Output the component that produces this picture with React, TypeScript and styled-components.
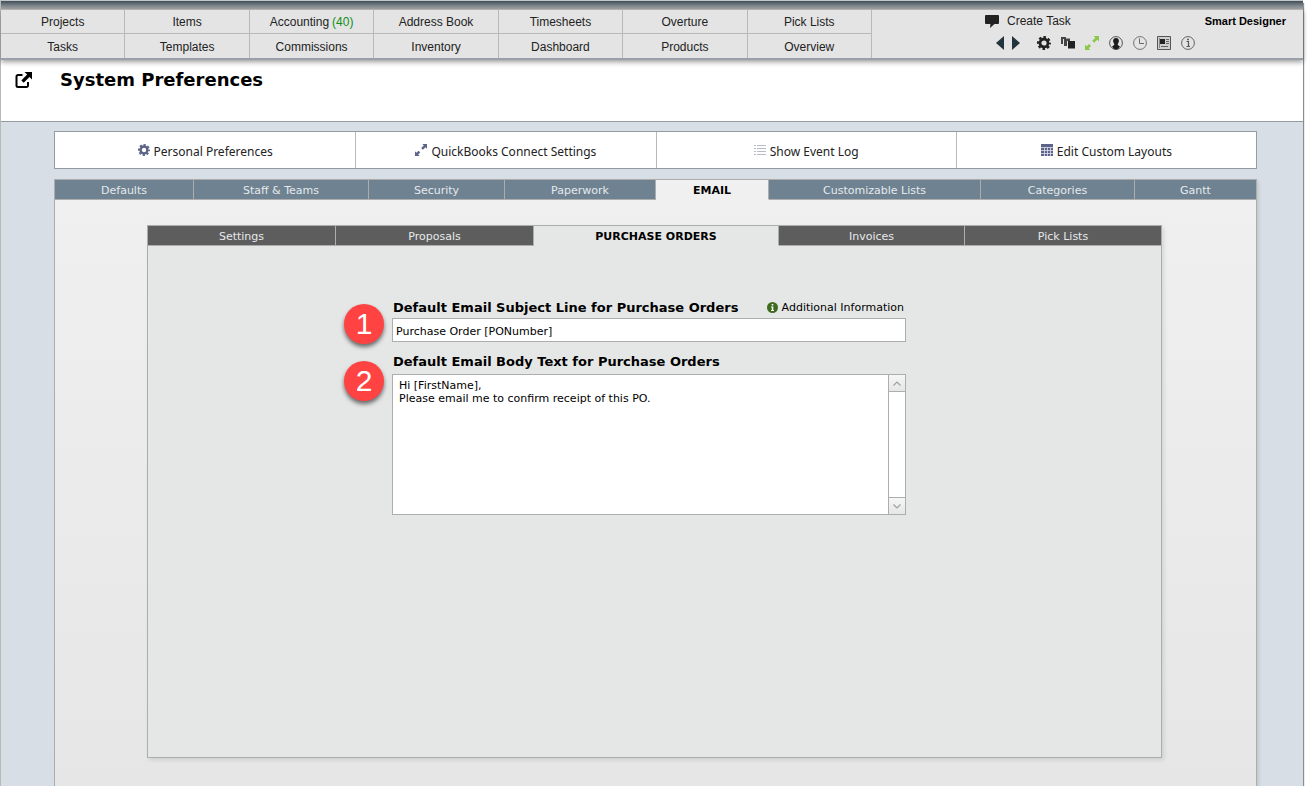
import React from "react";
import styled, { createGlobalStyle } from "styled-components";

const verdana = '"DejaVu Sans", Verdana, sans-serif';
const arial = '"Liberation Sans", Arial, sans-serif';
const humanist = '"Noto Sans", "Open Sans", sans-serif';

const GlobalStyle = createGlobalStyle`
  *, *::before, *::after { box-sizing: border-box; }
  body { margin: 0; background: #fff; color: #000; font-family: ${verdana}; font-size: 11px; }
  button { margin: 0; padding: 0; border: 0; background: none; color: inherit; font: inherit; cursor: pointer; }
  svg { display: block; flex: none; }
`;

const Page = styled.div`
  display: flex;
  flex-direction: column;
  min-height: 100vh;
  margin-right: 4px;
  background: #d7dee5;
  border-top: 1px solid #c4c8c8;
  border-left: 1px solid #b9b9b9;
  box-shadow: 1px 3px 1px #8c8c8c;
`;

const TopStrip = styled.div`
  height: 8px;
  background: linear-gradient(#3f4e59, #a9acae);
`;

const Header = styled.header`
  position: relative;
  display: grid;
  grid-template-columns: 871fr 431fr;
  background: #e4e4e4;
  border-top: 1px solid #b0b0b0;
  border-bottom: 2px solid #9aa0a7;
  box-shadow: 0 2px 5px rgba(0, 0, 0, 0.4);
  font-family: ${arial};
  font-size: 12px;
  color: #222;
`;

const MainNav = styled.nav`
  display: grid;
  grid-template-columns: repeat(7, 1fr);
  grid-template-rows: 24px 24px;
`;

const NavLink = styled.a`
  display: flex;
  align-items: center;
  justify-content: center;
  gap: 3px;
  padding-top: 1px;
  border-right: 1px solid #b9b9b9;
  color: inherit;
  text-decoration: none;
  white-space: nowrap;
  &:nth-child(-n + 7) { border-bottom: 1px solid #b9b9b9; }
`;

const Count = styled.span`
  color: #0f8f1c;
`;

const HeaderTools = styled.div`
  display: flex;
  flex-direction: column;
  gap: 4px;
  padding: 2px 17px 0 113px;
`;

const ToolLine = styled.div`
  display: flex;
  align-items: center;
  justify-content: space-between;
  height: 18px;
`;

const CreateTask = styled.button`
  display: flex;
  align-items: center;
  gap: 8px;
`;

const UserName = styled.strong`
  font-size: 11px;
  color: #000;
`;

const IconLine = styled.div`
  display: flex;
  align-items: center;
  gap: 10px;
  height: 18px;
  padding-left: 11px;
`;

const Arrows = styled.div`
  display: flex;
  gap: 8px;
  margin-right: 7px;
`;

const IconButton = styled.button`
  display: flex;
`;

const TitleBar = styled.div`
  display: flex;
  align-items: flex-start;
  gap: 28px;
  height: 62px;
  padding: 11px 13px;
  background: #fff;
  border-bottom: 1px solid #939ca1;
`;

const Title = styled.h1`
  margin: 0;
  font-size: 18px;
  line-height: 18px;
`;

const Content = styled.main`
  flex: 1;
  display: flex;
  flex-direction: column;
  gap: 10px;
  padding: 9px 46px 0 53px;
`;

const Toolbar = styled.div`
  display: grid;
  grid-template-columns: repeat(4, 1fr);
  height: 38px;
  background: #fff;
  border: 1px solid #939ca1;
`;

const ToolbarButton = styled.button`
  display: flex;
  align-items: center;
  justify-content: center;
  gap: 4px;
  border-left: 1px solid #b9b9b9;
  font-family: ${humanist};
  font-size: 12px;
  color: #222;
  white-space: nowrap;
  &:first-child { border-left: 0; }
`;

const ToolbarLabel = styled.span`
  padding-top: 3px;
`;

const Panel = styled.section`
  flex: 1;
  display: flex;
  flex-direction: column;
  border: 1px solid #adadad;
  border-bottom: 0;
  background: linear-gradient(#f0f0f0, #e6e6e6);
  box-shadow: 2px 2px 3px rgba(0, 0, 0, 0.1);
`;

const Tabs = styled.div<{ $columns: string }>`
  display: grid;
  grid-template-columns: ${(p) => p.$columns};
  height: 20px;
`;

const Tab = styled.button<{ $fill: string }>`
  padding-top: 2px;
  border-right: 1px solid #adadad;
  border-bottom: 1px solid #adadad;
  background: ${(p) => p.$fill};
  color: #e6e9eb;
  white-space: nowrap;
  &:last-child { border-right: 0; }
  &[aria-selected="true"] {
    background: none;
    border-bottom-color: transparent;
    color: #000;
    font-weight: bold;
  }
`;

const InnerPanel = styled.section`
  flex: 1;
  display: flex;
  flex-direction: column;
  margin: 25px 94px 28px 92px;
  border: 1px solid #adadad;
  background: #e5e7e6;
  box-shadow: 2px 2px 4px rgba(0, 0, 0, 0.1);
`;

const Form = styled.form`
  display: flex;
  flex-direction: column;
  gap: 10px;
  padding: 52px 0 60px;
`;

const FieldRow = styled.div`
  display: grid;
  grid-template-columns: 244fr 514fr 255fr;
  align-items: start;
`;

const Step = styled.span<{ $top: number }>`
  justify-self: end;
  width: 40px;
  height: 40px;
  margin: ${(p) => p.$top}px 8px -8px 0;
  border-radius: 50%;
  background: #ff4343;
  box-shadow: 0 3px 4px rgba(0, 0, 0, 0.55);
  color: #fff;
  font: 30px/40px ${arial};
  text-align: center;
`;

const Field = styled.div`
  display: flex;
  flex-direction: column;
  gap: 2px;
`;

const LabelLine = styled.div`
  display: flex;
  align-items: center;
  justify-content: space-between;
  height: 18px;
  padding: 0 2px 0 1px;
`;

const Label = styled.label`
  font-size: 13px;
  font-weight: bold;
  white-space: nowrap;
`;

const InfoLink = styled.a`
  display: flex;
  align-items: center;
  gap: 4px;
  color: #000;
  text-decoration: none;
  white-space: nowrap;
`;

const TextInput = styled.input`
  width: 100%;
  height: 24px;
  padding: 2px 3px 0;
  border: 1px solid #adadad;
  border-radius: 0;
  background: #fff;
  font: 11px/13px ${verdana};
  outline: 0;
`;

const TextBox = styled.div`
  display: flex;
  height: 141px;
  margin-top: 2px;
  border: 1px solid #adadad;
  background: #fff;
`;

const TextArea = styled.textarea`
  flex: 1;
  min-width: 0;
  padding: 4px 6px;
  border: 0;
  background: none;
  font: 11px/13px ${verdana};
  resize: none;
  outline: 0;
  overflow: hidden;
`;

const ScrollBar = styled.div`
  display: flex;
  flex-direction: column;
  justify-content: space-between;
  width: 17px;
  border-left: 1px solid #adadad;
`;

const ScrollButton = styled.button`
  display: flex;
  align-items: center;
  justify-content: center;
  height: 17px;
  background: linear-gradient(#f6f6f6, #e6e6e6);
  border-bottom: 1px solid #adadad;
  &:last-child {
    border-bottom: 0;
    border-top: 1px solid #adadad;
  }
`;

const Gear = ({ size, color }: { size: number; color: string }) => (
  <svg width={size} height={size} viewBox="0 0 14 14" fill="none" stroke={color}>
    <circle cx="7" cy="7" r="4" strokeWidth="2.8" />
    <circle cx="7" cy="7" r="5.8" strokeWidth="2.4" strokeDasharray="2.5 2.055" strokeDashoffset="1.25" />
  </svg>
);

const Expand = ({ size, color }: { size: number; color: string }) => (
  <svg width={size} height={size} viewBox="0 0 14 14" fill={color}>
    <path d="M8.6 0H14v5.4l-1.7-1.7-3.1 3.1-2-2 3.1-3.1zM5.4 14H0V8.6l1.7 1.7 2.4-2.4 2 2-2.4 2.4z" />
  </svg>
);

const OpenWindow = () => (
  <svg width="18" height="18" viewBox="0 0 18 18" fill="none">
    <path d="M8.5 4H4a1.5 1.5 0 0 0-1.5 1.5V14.500A1.5 1.5 0 0 0 4 16h8.500A1.500 1.500 0 0 0 14 14.500v-3.500" stroke="#000" strokeWidth="2" />
    <path d="M10.500 1H18v7.500l-2.500-2.500-5.800 5.800-2.400-2.400 5.800-5.800z" fill="#000" />
  </svg>
);

const Speech = () => (
  <svg width="14" height="13" viewBox="0 0 14 13" fill="#222">
    <path d="M1 0h12q1 0 1 1v7q0 1-1 1H9.500L5 13l.4-4H1Q0 9 0 8V1q0-1 1-1z" />
  </svg>
);

const Triangle = ({ left }: { left?: boolean }) => (
  <svg width="8" height="14" viewBox="0 0 8 14" fill="#24343f">
    <path d={left ? "M8 0v14L0 7z" : "M0 0v14l8-7z"} />
  </svg>
);

const Windows = () => (
  <svg width="14" height="12" viewBox="0 0 14 12">
    <path d="M0 0h5v2H2v5H0z" fill="#444" />
    <path d="M3 1.500h6v2.500H6v5H3z" fill="#444" />
    <path d="M7 4h7v7.500H7z" fill="#222" />
  </svg>
);

const Person = () => (
  <svg width="14" height="14" viewBox="0 0 14 14">
    <circle cx="7" cy="7" r="6.400" fill="none" stroke="#444" strokeWidth=".9" />
    <path d="M7 2c2.200 0 3 1.400 2.900 3.100-.1 1.500-.7 2.200-1.100 2.800v1.200l2.200 1.400Q9.500 13.500 7 13.500t-4-3l2.200-1.400V7.900C4.800 7.300 4.200 6.600 4.100 5.100 4 3.400 4.800 2 7 2z" fill="#1c1c1c" />
  </svg>
);

const Clock = () => (
  <svg width="14" height="14" viewBox="0 0 14 14" fill="none" stroke="#666">
    <circle cx="7" cy="7" r="6.400" strokeWidth=".9" />
    <path d="M6.500 2.500v5h4.500" />
  </svg>
);

const News = () => (
  <svg width="14" height="14" viewBox="0 0 14 14" fill="none">
    <path d="M.5.500h13v13H.5z" fill="#cfcfcf" stroke="#555" />
    <path d="M2.500 2v10" stroke="#888" />
    <path d="M3 3h5v5H3z" fill="#222" />
    <path d="M9 3.500h3M9 5.500h3M9 7.500h3M4 10.500h7" stroke="#666" />
  </svg>
);

const Info = () => (
  <svg width="14" height="14" viewBox="0 0 14 14" fill="none" stroke="#555">
    <circle cx="7" cy="7" r="6.400" strokeWidth=".9" />
    <path d="M5.500 5.500H7.500V10.500M5.500 10.500h3.500" strokeWidth="1.200" />
    <path d="M6.300 2.800h1.500v1.400H6.300z" fill="#333" stroke="none" />
  </svg>
);

const ListIcon = () => (
  <svg width="12" height="12" viewBox="0 0 12 12" stroke="#b9bcc8">
    <path d="M0 1.500h2M3 1.500h9M0 4.500h2M3 4.500h9M0 7.500h2M3 7.500h9M0 10.500h2M3 10.500h9" />
  </svg>
);

const TableIcon = () => (
  <svg width="12" height="12" viewBox="0 0 12 12">
    <path d="M0 0h12v12H0z" fill="#5d6389" />
    <path d="M0 3.500h12M0 6.500h12M0 9.500h12M3.500 3.500V12M6.500 3.500V12M9.500 3.500V12" stroke="#dfe1ec" strokeWidth=".8" />
  </svg>
);

const InfoDot = () => (
  <svg width="11" height="11" viewBox="0 0 11 11">
    <circle cx="5.500" cy="5.500" r="5.500" fill="#3d6b1f" />
    <path d="M4.700 2h1.600v1.400H4.700zM4 4.400h2.300v3.500H7V9H4V7.900h.8V5.400H4z" fill="#fff" />
  </svg>
);

const Chevron = ({ down }: { down?: boolean }) => (
  <svg width="8" height="5" viewBox="0 0 8 5" fill="none" stroke="#a0a0a0" strokeWidth="1.200">
    <path d={down ? "M.5.500L4 4 7.500.500" : "M.5 4.500L4 1l3.500 3.500"} />
  </svg>
);

const navItems = [
  "Projects", "Items", "Accounting", "Address Book", "Timesheets", "Overture", "Pick Lists",
  "Tasks", "Templates", "Commissions", "Inventory", "Dashboard", "Products", "Overview",
];

const headerIcons = [
  { label: "Settings", icon: <Gear size={14} color="#222" /> },
  { label: "Windows", icon: <Windows /> },
  { label: "Expand", icon: <Expand size={14} color="#8cc84b" /> },
  { label: "Account", icon: <Person /> },
  { label: "Time", icon: <Clock /> },
  { label: "News", icon: <News /> },
  { label: "Info", icon: <Info /> },
];

const actions = [
  { label: "Personal Preferences", icon: <Gear size={12} color="#5d6389" /> },
  { label: "QuickBooks Connect Settings", icon: <Expand size={12} color="#5d6389" /> },
  { label: "Show Event Log", icon: <ListIcon /> },
  { label: "Edit Custom Layouts", icon: <TableIcon /> },
];

const sections = ["Defaults", "Staff & Teams", "Security", "Paperwork", "EMAIL", "Customizable Lists", "Categories", "Gantt"];
const emailTabs = ["Settings", "Proposals", "PURCHASE ORDERS", "Invoices", "Pick Lists"];

function TabRow({ items, active, fill, columns }: { items: string[]; active: string; fill: string; columns: string }) {
  return (
    <Tabs role="tablist" $columns={columns}>
      {items.map((item) => (
        <Tab key={item} type="button" role="tab" aria-selected={item === active} $fill={fill}>
          {item}
        </Tab>
      ))}
    </Tabs>
  );
}

export default function App() {
  return (
    <>
      <GlobalStyle />
      <Page>
        <TopStrip />
        <Header>
          <MainNav>
            {navItems.map((item) => (
              <NavLink key={item} href="#">
                {item}
                {item === "Accounting" && <Count>(40)</Count>}
              </NavLink>
            ))}
          </MainNav>
          <HeaderTools>
            <ToolLine>
              <CreateTask type="button">
                <Speech />
                Create Task
              </CreateTask>
              <UserName>Smart Designer</UserName>
            </ToolLine>
            <IconLine>
              <Arrows>
                <IconButton type="button" aria-label="Back"><Triangle left /></IconButton>
                <IconButton type="button" aria-label="Forward"><Triangle /></IconButton>
              </Arrows>
              {headerIcons.map(({ label, icon }) => (
                <IconButton key={label} type="button" aria-label={label}>{icon}</IconButton>
              ))}
            </IconLine>
          </HeaderTools>
        </Header>
        <TitleBar>
          <IconButton type="button" aria-label="Open in new window"><OpenWindow /></IconButton>
          <Title>System Preferences</Title>
        </TitleBar>
        <Content>
          <Toolbar>
            {actions.map(({ label, icon }) => (
              <ToolbarButton key={label} type="button">
                {icon}
                <ToolbarLabel>{label}</ToolbarLabel>
              </ToolbarButton>
            ))}
          </Toolbar>
          <Panel>
            <TabRow
              items={sections}
              active="EMAIL"
              fill="#6e8292"
              columns="139fr 175fr 136fr 151fr 113fr 212fr 154fr 121fr"
            />
            <InnerPanel>
              <TabRow
                items={emailTabs}
                active="PURCHASE ORDERS"
                fill="#5d5d5d"
                columns="188fr 198fr 245fr 186fr 196fr"
              />
              <Form>
                <FieldRow>
                  <Step $top={6}>1</Step>
                  <Field>
                    <LabelLine>
                      <Label htmlFor="subject">Default Email Subject Line for Purchase Orders</Label>
                      <InfoLink href="#"><InfoDot />Additional Information</InfoLink>
                    </LabelLine>
                    <TextInput id="subject" defaultValue="Purchase Order [PONumber]" />
                  </Field>
                </FieldRow>
                <FieldRow>
                  <Step $top={9}>2</Step>
                  <Field>
                    <LabelLine>
                      <Label htmlFor="body">Default Email Body Text for Purchase Orders</Label>
                    </LabelLine>
                    <TextBox>
                      <TextArea id="body" defaultValue={"Hi [FirstName],\nPlease email me to confirm receipt of this PO."} />
                      <ScrollBar>
                        <ScrollButton type="button" aria-label="Scroll up"><Chevron /></ScrollButton>
                        <ScrollButton type="button" aria-label="Scroll down"><Chevron down /></ScrollButton>
                      </ScrollBar>
                    </TextBox>
                  </Field>
                </FieldRow>
              </Form>
            </InnerPanel>
          </Panel>
        </Content>
      </Page>
    </>
  );
}
